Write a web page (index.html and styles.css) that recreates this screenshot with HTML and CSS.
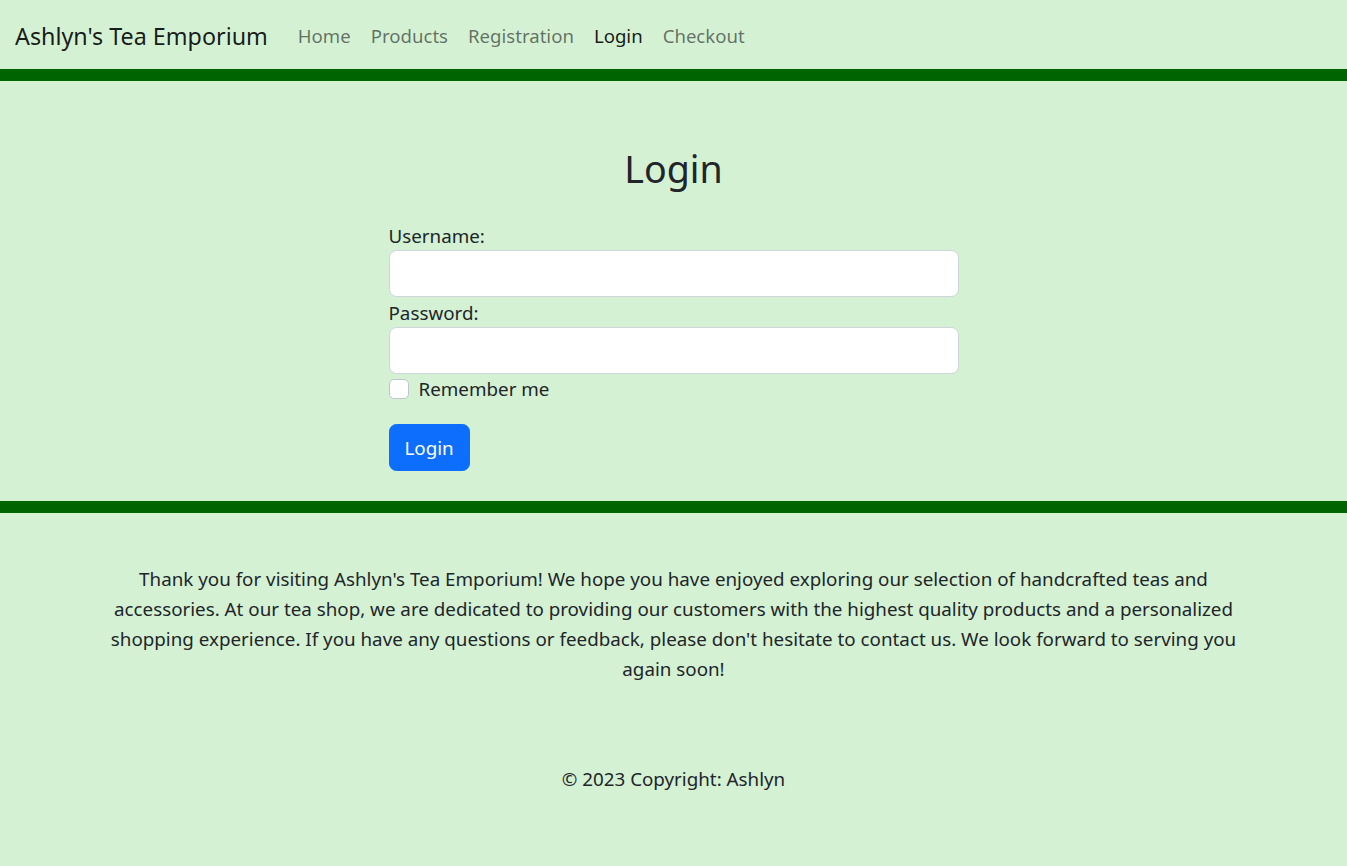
FILE: index.html
```html
<!DOCTYPE html>
<html lang="en">
<head>
<meta charset="utf-8">
<title>Login - Ashlyn's Tea Emporium</title>
<link rel="stylesheet" href="styles.css">
</head>
<body>
<nav class="navbar">
  <a class="brand" href="#">Ashlyn's Tea Emporium</a>
  <ul class="nav">
    <li><a class="nav-link" href="#">Home</a></li>
    <li><a class="nav-link" href="#">Products</a></li>
    <li><a class="nav-link" href="#">Registration</a></li>
    <li><a class="nav-link active" href="#">Login</a></li>
    <li><a class="nav-link" href="#">Checkout</a></li>
  </ul>
</nav>
<div class="bar"></div>
<main class="main">
  <h2 class="title">Login</h2>
  <form class="form">
    <label class="label" for="username">Username:</label>
    <input class="input" type="text" id="username">
    <label class="label" for="password">Password:</label>
    <input class="input" type="password" id="password">
    <div class="check">
      <input class="check-box" type="checkbox" id="remember">
      <label class="check-label" for="remember">Remember me</label>
    </div>
    <button class="btn" type="button">Login</button>
  </form>
</main>
<div class="bar"></div>
<footer class="footer">
  <p class="thanks">Thank you for visiting Ashlyn's Tea Emporium! We hope you have enjoyed exploring our selection of handcrafted teas and accessories. At our tea shop, we are dedicated to providing our customers with the highest quality products and a personalized shopping experience. If you have any questions or feedback, please don't hesitate to contact us. We look forward to serving you again soon!</p>
  <p class="copy">© 2023 Copyright: Ashlyn</p>
</footer>
</body>
</html>
```
FILE: styles.css
```css
* { box-sizing: border-box; }
html, body {
  margin: 0;
  padding: 0;
  background: #d4f1d4;
}
body {
  font-family: "Noto Sans", "Open Sans", sans-serif;
  font-size: 18.8px;
  line-height: 30px;
  color: #212529;
  min-height: 866px;
}
a { text-decoration: none; }

.navbar {
  height: 69px;
  display: flex;
  align-items: center;
  padding: 2px 15px 0;
}
.brand {
  font-size: 23.3px;
  line-height: 30px;
  color: rgba(0,0,0,.9);
  margin-right: 20px;
}
.nav {
  display: flex;
  list-style: none;
  margin: 0;
  padding: 0;
}
.nav-link {
  display: block;
  padding: 0 10px;
  font-size: 18.6px;
  color: rgba(0,0,0,.55);
}
.nav-link.active { color: rgba(0,0,0,.9); }

.bar {
  height: 12px;
  background: #006400;
}

.main {
  padding: 65px 0 30px;
}
.title {
  margin: 0 0 29px;
  text-align: center;
  font-size: 37.6px;
  line-height: 45px;
  font-weight: 400;
}
.form {
  width: 570px;
  margin: 0 auto;
  display: flex;
  flex-direction: column;
  align-items: flex-start;
}
.label {
  display: block;
  height: 30px;
  padding-top: 1px;
  line-height: 30px;
}
.input {
  width: 100%;
  height: 47px;
  border: 1px solid #ced4da;
  border-radius: 7.5px;
  background: #fff;
  padding: 0 15px;
  font: inherit;
}
.check {
  display: flex;
  align-items: flex-start;
  height: 30px;
}
.check-box {
  appearance: none;
  -webkit-appearance: none;
  width: 20px;
  height: 20px;
  margin: 5px 10px 0 0;
  border: 1px solid #bfc5cb;
  border-radius: 5px;
  background: #fff;
}
.btn {
  margin-top: 20px;
  height: 47px;
  padding: 0 15px;
  border: 1px solid #0d6efd;
  border-radius: 7.5px;
  background: #0d6efd;
  color: #fff;
  font: inherit;
  line-height: 30px;
}

.footer {
  max-width: 1170px;
  margin: 0 auto;
  padding-top: 51px;
  text-align: center;
}
.thanks { margin: 0 0 80px; }
.copy { margin: 0; }
```
